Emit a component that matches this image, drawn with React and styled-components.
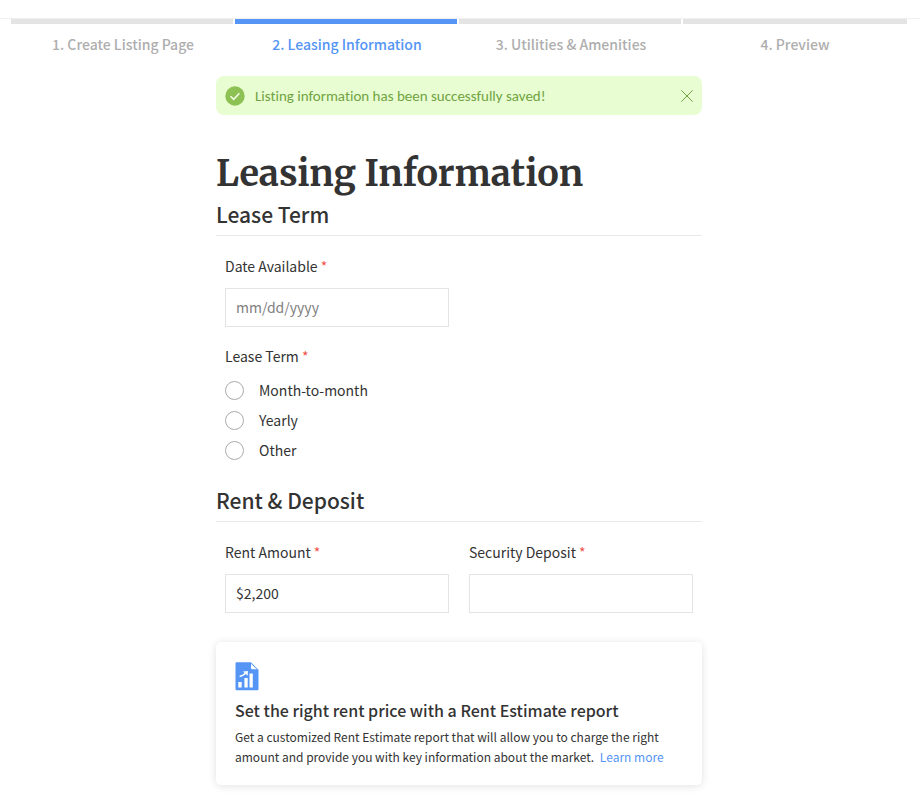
import React, { useState } from "react";
import styled, { createGlobalStyle } from "styled-components";

const GlobalStyle = createGlobalStyle`
  * {
    box-sizing: border-box;
  }
  body {
    margin: 0;
    background: #fff;
    color: #333;
    font-family: "Noto Sans CJK SC", "Open Sans", sans-serif;
    font-size: 14px;
    line-height: 20px;
  }
  h1, h2, h3, p, ol, fieldset {
    margin: 0;
    padding: 0;
  }
  input, button {
    font: inherit;
    color: inherit;
  }
`;

const Page = styled.div`
  padding-top: 18px;
`;

const Steps = styled.ol`
  display: grid;
  grid-template-columns: repeat(4, 1fr);
  padding: 0 13px 0 11px;
  border-top: 1px solid #f0f0f0;
  list-style: none;
`;

const Step = styled.li`
  text-align: center;
  font-weight: 500;
  color: ${(props) => (props.$active ? "#5495f5" : "#aeaeae")};
  &::before {
    content: "";
    display: block;
    height: 5px;
    margin: 0 2px 10px 0;
    background: ${(props) => (props.$active ? "#5495f5" : "#e4e4e4")};
  }
  &:last-child::before {
    margin-right: 0;
  }
`;

const Content = styled.main`
  width: 100%;
  max-width: 488px;
  margin: 0 auto;
  padding: 22px 2px 16px 0;
`;

const Alert = styled.div`
  display: flex;
  align-items: center;
  height: 39px;
  padding: 0 8px 0 9px;
  border-radius: 8px;
  background: #e8fdd2;
  color: #71a341;
  font-family: Carlito, Lato, sans-serif;
  font-size: 15px;
  font-variant-ligatures: none;
`;

const AlertText = styled.p`
  flex: 1;
  margin-left: 10px;
`;

const CloseButton = styled.button`
  display: flex;
  padding: 0;
  border: none;
  background: none;
  cursor: pointer;
`;

const Title = styled.h1`
  margin-top: 36px;
  font-family: Merriweather, "Liberation Serif", serif;
  font-size: 36px;
  line-height: 46px;
  font-weight: 700;
`;

const SectionTitle = styled.h2`
  margin-top: ${(props) => (props.$spaced ? "18px" : "0")};
  padding: 2px 0 6px;
  border-bottom: 1px solid #e9e9e9;
  font-size: 21px;
  line-height: 30px;
  font-weight: 500;
`;

const Fields = styled.div`
  display: grid;
  grid-template-columns: 1fr 1fr;
  gap: 20px;
  padding: 20px 9px 0;
`;

const Field = styled.div`
  display: flex;
  flex-direction: column;
  gap: 12px;
`;

const Required = styled.span`
  color: #f0524b;
`;

const Input = styled.input`
  width: 100%;
  height: 39px;
  padding: 0 10px 2px;
  border: 1px solid #e4e4e4;
  border-radius: 0;
  background: #fff;
  outline: none;
  &::placeholder {
    color: #808080;
    opacity: 1;
  }
`;

const RadioGroup = styled.fieldset`
  border: none;
  padding: 0 9px;
  margin-top: 19px;
`;

const Legend = styled.legend`
  padding: 0;
  margin-bottom: 9px;
`;

const Option = styled.label`
  display: flex;
  align-items: center;
  height: 30px;
  gap: 15px;
`;

const Radio = styled.input`
  appearance: none;
  width: 19px;
  height: 19px;
  margin: 0;
  border: 1px solid #aaa;
  border-radius: 50%;
  background: #fff;
  &:checked {
    border: 6px solid #5495f5;
  }
`;

const Card = styled.section`
  margin-top: 29px;
  padding: 20px 19px 18px;
  border-radius: 5px;
  box-shadow: 0 1px 8px rgba(0, 0, 0, 0.12);
`;

const CardTitle = styled.h3`
  margin-top: 7px;
  font-size: 16px;
  line-height: 24px;
  font-weight: 500;
`;

const CardText = styled.p`
  margin-top: 5px;
  font-size: 12px;
`;

const Link = styled.a`
  display: inline-block;
  margin-left: 3px;
  color: #5495f5;
  text-decoration: none;
`;

const Icon = styled.svg`
  display: block;
  flex: none;
`;

const steps = [
  "1. Create Listing Page",
  "2. Leasing Information",
  "3. Utilities & Amenities",
  "4. Preview",
];

const terms = ["Month-to-month", "Yearly", "Other"];

const CheckIcon = () => (
  <Icon width="20" height="20" viewBox="0 0 20 20" fill="none">
    <circle cx="10" cy="10" r="9.7" fill="#8dc153" />
    <path d="M5.5 10.2l3.2 3.1 5.7-6.1" stroke="#f1fde6" strokeWidth="1.6" />
  </Icon>
);

const CloseIcon = () => (
  <Icon width="14" height="14" viewBox="0 0 14 14" fill="none">
    <path d="M1.3 1.3l11.4 11.4M12.7 1.3L1.3 12.7" stroke="#71a341" />
  </Icon>
);

const ReportIcon = () => (
  <Icon width="24" height="29" viewBox="0 0 24 29">
    <path d="M1.5 0.3H15.8L23.5 7.8V27a1.2 1.2 0 0 1-1.2 1.2H1.7A1.2 1.2 0 0 1 .5 27V1.4Q.5.3 1.5.3z" fill="#5495f5" />
    <path d="M16 1.8V6a1.3 1.3 0 0 0 1.3 1.3h4.6z" fill="#fff" />
    <path d="M3.3 20h3.4v5.5H3.3zM9.4 16h3.3v9.5H9.4zM14.5 11.5h3.3v14h-3.3z" fill="#fff" />
    <path d="M4.6 14.4Q9 13.4 10.4 11.2" fill="none" stroke="#fff" strokeWidth="1.5" />
    <path d="M8 9.4l4.9-.3-.2 4.6z" fill="#fff" />
  </Icon>
);

const App = () => {
  const [saved, setSaved] = useState(true);
  const [rent, setRent] = useState("$2,200");

  return (
    <Page>
      <GlobalStyle />
      <Steps>
        {steps.map((step, i) => (
          <Step key={step} $active={i === 1} aria-current={i === 1 ? "step" : undefined}>
            {step}
          </Step>
        ))}
      </Steps>
      <Content>
        {saved && (
          <Alert role="status">
            <CheckIcon />
            <AlertText>Listing information has been successfully saved!</AlertText>
            <CloseButton type="button" aria-label="Close" onClick={() => setSaved(false)}>
              <CloseIcon />
            </CloseButton>
          </Alert>
        )}
        <Title>Leasing Information</Title>
        <SectionTitle>Lease Term</SectionTitle>
        <Fields>
          <Field>
            <label htmlFor="date">
              Date Available <Required>*</Required>
            </label>
            <Input id="date" placeholder="mm/dd/yyyy" />
          </Field>
        </Fields>
        <RadioGroup>
          <Legend>
            Lease Term <Required>*</Required>
          </Legend>
          {terms.map((term) => (
            <Option key={term}>
              <Radio type="radio" name="term" value={term} />
              {term}
            </Option>
          ))}
        </RadioGroup>
        <SectionTitle $spaced>Rent &amp; Deposit</SectionTitle>
        <Fields>
          <Field>
            <label htmlFor="rent">
              Rent Amount <Required>*</Required>
            </label>
            <Input id="rent" value={rent} onChange={(e) => setRent(e.target.value)} />
          </Field>
          <Field>
            <label htmlFor="deposit">
              Security Deposit <Required>*</Required>
            </label>
            <Input id="deposit" />
          </Field>
        </Fields>
        <Card>
          <ReportIcon />
          <CardTitle>Set the right rent price with a Rent Estimate report</CardTitle>
          <CardText>
            Get a customized Rent Estimate report that will allow you to charge the right
            amount and provide you with key information about the market.{" "}
            <Link href="#">Learn more</Link>
          </CardText>
        </Card>
      </Content>
    </Page>
  );
};

export default App;
